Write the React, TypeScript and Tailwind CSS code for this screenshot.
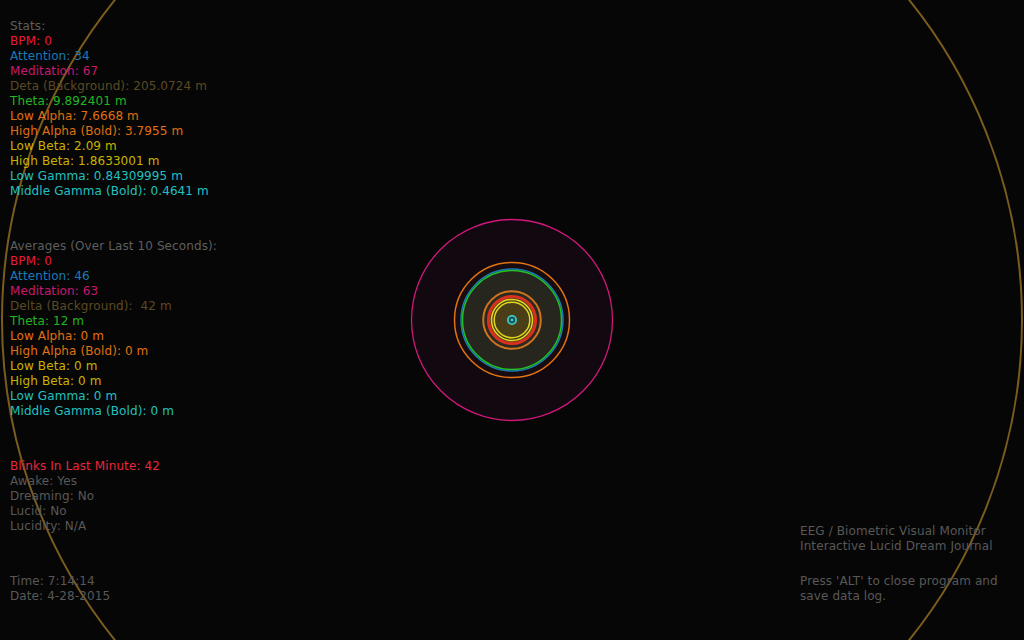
import React from "react";

type Line = { t: string; c: string };

const stats: Line[] = [
  { t: "Stats:", c: "text-[#5e5e5e]" },
  { t: "BPM: 0", c: "text-[#e8183c]" },
  { t: "Attention: 34", c: "text-[#1a7ab8]" },
  { t: "Meditation: 67", c: "text-[#c8186e]" },
  { t: "Deta (Background): 205.0724 m", c: "text-[#5a4a22]" },
  { t: "Theta: 9.892401 m", c: "text-[#22b422]" },
  { t: "Low Alpha: 7.6668 m", c: "text-[#e07010]" },
  { t: "High Alpha (Bold): 3.7955 m", c: "text-[#e07010]" },
  { t: "Low Beta: 2.09 m", c: "text-[#c8b400]" },
  { t: "High Beta: 1.8633001 m", c: "text-[#c8b400]" },
  { t: "Low Gamma: 0.84309995 m", c: "text-[#22c0c0]" },
  { t: "Middle Gamma (Bold): 0.4641 m", c: "text-[#22c0c0]" },
];

const avgs: Line[] = [
  { t: "Averages (Over Last 10 Seconds):", c: "text-[#5e5e5e]" },
  { t: "BPM: 0", c: "text-[#e8183c]" },
  { t: "Attention: 46", c: "text-[#1a7ab8]" },
  { t: "Meditation: 63", c: "text-[#c8186e]" },
  { t: "Delta (Background):  42 m", c: "text-[#5a4a22]" },
  { t: "Theta: 12 m", c: "text-[#22b422]" },
  { t: "Low Alpha: 0 m", c: "text-[#e07010]" },
  { t: "High Alpha (Bold): 0 m", c: "text-[#e07010]" },
  { t: "Low Beta: 0 m", c: "text-[#c8b400]" },
  { t: "High Beta: 0 m", c: "text-[#c8b400]" },
  { t: "Low Gamma: 0 m", c: "text-[#22c0c0]" },
  { t: "Middle Gamma (Bold): 0 m", c: "text-[#22c0c0]" },
];

const status: Line[] = [
  { t: "Blinks In Last Minute: 42", c: "text-[#e8283c]" },
  { t: "Awake: Yes", c: "text-[#585858]" },
  { t: "Dreaming: No", c: "text-[#585858]" },
  { t: "Lucid: No", c: "text-[#585858]" },
  { t: "Lucidity: N/A", c: "text-[#585858]" },
];

const time: Line[] = [
  { t: "Time: 7:14:14", c: "text-[#585858]" },
  { t: "Date: 4-28-2015", c: "text-[#585858]" },
];

function Block({ lines, className = "" }: { lines: Line[]; className?: string }) {
  return (
    <div className={className}>
      {lines.map((l, i) => (
        <div key={i} className={`${l.c} whitespace-pre`}>
          {l.t}
        </div>
      ))}
    </div>
  );
}

function Visual() {
  return (
    <svg className="absolute inset-0" width="1024" height="640" viewBox="0 0 1024 640">
      <circle cx="512" cy="320" r="510" fill="none" stroke="#7a5c1e" strokeWidth="2" />
      <circle cx="512" cy="320" r="100.5" fill="#120810" stroke="#d0187a" strokeWidth="1.3" />
      <circle cx="512" cy="320" r="57.5" fill="#180c10" stroke="#e07412" strokeWidth="1.5" />
      <circle cx="512" cy="320" r="51" fill="#1a1a1a" stroke="#1a7ab8" strokeWidth="1.5" />
      <circle cx="512" cy="320" r="49.5" fill="#26261e" stroke="#22c022" strokeWidth="1.5" />
      <circle cx="512" cy="320" r="28.8" fill="#2a2a1e" stroke="#d07420" strokeWidth="2" />
      <circle cx="512" cy="320" r="23.5" fill="#4a3e18" stroke="#d83020" strokeWidth="3.2" />
      <circle cx="512" cy="320" r="20.5" fill="none" stroke="#e0d820" strokeWidth="1.5" />
      <circle cx="512" cy="320" r="17.8" fill="none" stroke="#e0d820" strokeWidth="1.5" />
      <circle cx="512" cy="320" r="4.2" fill="#1a5a5a" stroke="#40d0d0" strokeWidth="1.6" />
      <circle cx="512" cy="320" r="1.3" fill="#40d0d0" />
    </svg>
  );
}

export default function App() {
  return (
    <div
      className="relative w-[1024px] h-[640px] bg-[#060606] overflow-hidden text-[12px] leading-[15px] tracking-[0.1px]"
      style={{ fontFamily: '"DejaVu Sans", Verdana, sans-serif' }}
    >
      <Visual />
      <div className="relative flex h-full justify-between">
        <div className="flex flex-col pl-[10px] pt-[19px]">
          <Block lines={stats} />
          <Block lines={avgs} className="mt-[40px]" />
          <Block lines={status} className="mt-[40px]" />
          <Block lines={time} className="mt-[40px]" />
        </div>
        <div className="self-end w-[224px] pb-[36px] text-[#585858]">
          <div>EEG / Biometric Visual Monitor</div>
          <div>Interactive Lucid Dream Journal</div>
          <div className="mt-[20px]">Press 'ALT' to close program and save data log.</div>
        </div>
      </div>
    </div>
  );
}
